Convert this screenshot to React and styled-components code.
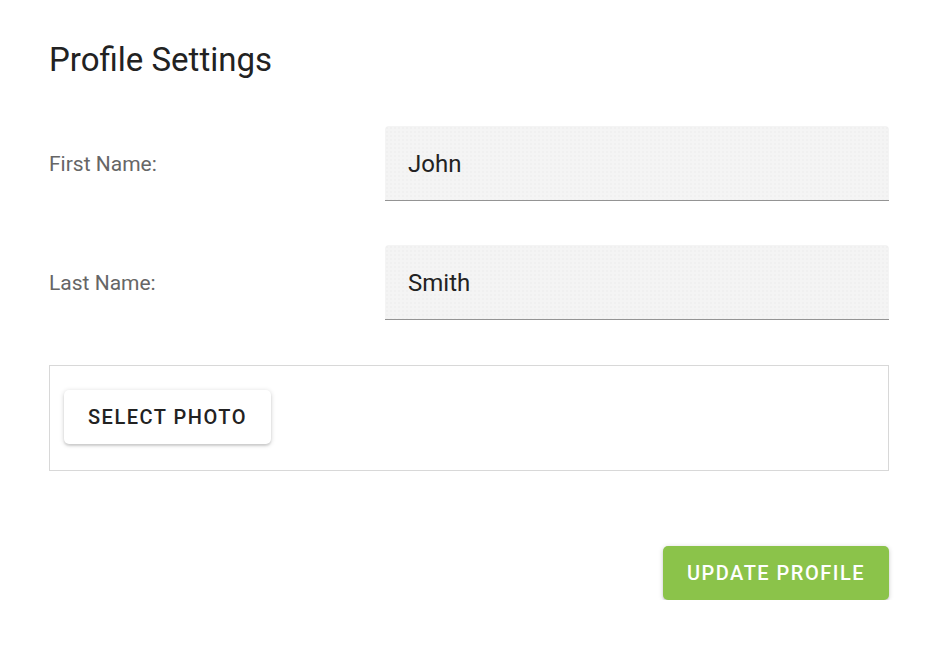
import React from "react";
import styled, { createGlobalStyle } from "styled-components";

const Global = createGlobalStyle`
  html, body { margin: 0; padding: 0; background: #fff; }
  body { font-family: Roboto, "Liberation Sans", Arial, sans-serif; }
  * { box-sizing: border-box; }
`;

const Page = styled.div`
  width: 840px;
  margin-left: 49px;
  padding-top: 40px;
  display: flex;
  flex-direction: column;
`;

const Title = styled.h1`
  margin: 0 0 46px;
  font-size: 33px;
  line-height: 40px;
  font-weight: 400;
  color: #222;
`;

const Row = styled.div`
  display: grid;
  grid-template-columns: 2fr 3fr;
  align-items: center;
  margin-bottom: 44px;
`;

const Label = styled.label`
  font-size: 21px;
  color: #666;
`;

const Field = styled.div`
  height: 75px;
  background-color: #f4f4f4;
  background-image: radial-gradient(rgba(0,0,0,0.035) 0.6px, transparent 0.8px);
  background-size: 4px 4px;
  border-radius: 4px 4px 0 0;
  border-bottom: 1px solid #949494;
  display: flex;
  align-items: center;
  padding: 2px 0 0 23px;
  font-size: 24px;
  color: #222;
`;

const PhotoBox = styled.div`
  border: 1px solid #d8d8d8;
  padding: 24px 14px 26px;
  display: flex;
  margin-top: 1px;
`;

const Button = styled.button`
  font-family: Roboto, "Liberation Sans", Arial, sans-serif;
  font-weight: 500;
  font-size: 20px;
  letter-spacing: 1.5px;
  text-transform: uppercase;
  height: 54px;
  padding: 0 24px;
  border: none;
  border-radius: 5px;
  cursor: pointer;
  background: ${(p) => (p.$primary ? "#8bc34a" : "#fff")};
  color: ${(p) => (p.$primary ? "#fff" : "#222")};
  box-shadow: 0 1px 5px rgba(0,0,0,0.18), 0 2px 2px rgba(0,0,0,0.1);
`;

const Actions = styled.div`
  display: flex;
  justify-content: flex-end;
  margin-top: 75px;
`;

export default function App() {
  return (
    <>
      <Global />
      <Page>
        <Title>Profile Settings</Title>
        <Row>
          <Label>First Name:</Label>
          <Field>John</Field>
        </Row>
        <Row>
          <Label>Last Name:</Label>
          <Field>Smith</Field>
        </Row>
        <PhotoBox>
          <Button>Select Photo</Button>
        </PhotoBox>
        <Actions>
          <Button $primary>Update Profile</Button>
        </Actions>
      </Page>
    </>
  );
}
